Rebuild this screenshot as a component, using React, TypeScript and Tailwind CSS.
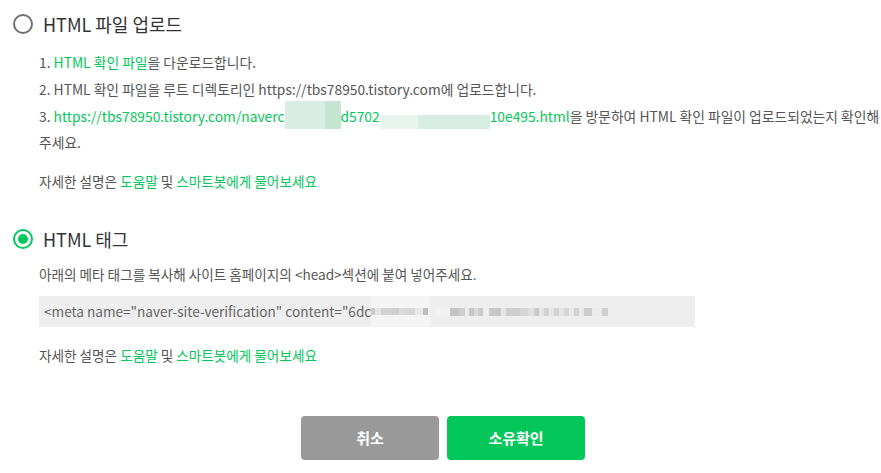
import React from "react";

const G = "text-[#03c75a]";

function Radio({ checked }: { checked: boolean }) {
  return checked ? (
    <span className="flex h-[20px] w-[20px] shrink-0 items-center justify-center rounded-full border-[2.5px] border-[#03c75a]">
      <span className="h-[10px] w-[10px] rounded-full bg-[#03c75a]" />
    </span>
  ) : (
    <span className="h-[20px] w-[20px] shrink-0 rounded-full border-2 border-[#707070]" />
  );
}

function Help() {
  return (
    <p className="whitespace-nowrap text-[13.6px] leading-[26px] text-[#555]">
      자세한 설명은 <span className={G}>도움말</span> 및{" "}
      <span className={G}>스마트봇에게 물어보세요</span>
    </p>
  );
}

const metaBlocks: [number, string][] = [
  [4, "#c9c9c9"], [6, "#e4e4e4"], [10, "#d2d2d2"], [8, "#cfcfcf"], [6, "#dadada"], [10, "#d6d6d6"],
  [8, "#e8e8e8"], [5, "#bdbdbd"], [14, "#f2f2f2"], [9, "#c4c4c4"], [6, "#cdcdcd"], [4, "#ececec"],
  [5, "#c6c6c6"], [4, "#d9d9d9"], [5, "#c9c9c9"], [6, "#ececec"], [12, "#c8c8c8"], [5, "#e6e6e6"],
  [14, "#cdcdcd"], [8, "#d4d4d4"], [6, "#e0e0e0"], [5, "#cacaca"], [5, "#e4e4e4"], [5, "#d1d1d1"],
  [5, "#e6e6e6"], [5, "#d3d3d3"], [5, "#e6e6e6"], [5, "#d5d5d5"], [5, "#e8e8e8"], [5, "#d0d0d0"],
  [5, "#e8e8e8"], [8, "#cccccc"], [10, "#eaeaea"], [6, "#cfcfcf"],
];

export default function App() {
  return (
    <div
      className="h-[473px] w-[881px] overflow-hidden bg-white pt-[14px]"
      style={{ fontFamily: '"Noto Sans CJK KR", "Noto Sans", sans-serif' }}
    >
      <div className="flex items-center gap-[10px] pl-[13px]">
        <Radio checked={false} />
        <span className="text-[18px] leading-[20px] text-[#333]">HTML 파일 업로드</span>
      </div>

      <div className="mt-[15px] pl-[39px] text-[13.8px] leading-[26px] text-[#555]">
        <p className="whitespace-nowrap">
          1. <span className={G}>HTML 확인 파일</span>을 다운로드합니다.
        </p>
        <p className="mt-px whitespace-nowrap">
          2. HTML 확인 파일을 루트 디렉토리인 https://tbs78950.tistory.com에 업로드합니다.
        </p>
        <p className="mt-px whitespace-nowrap">
          3. <span className={G}>https://tbs78950.tistory.com/naverc</span>
          <span className="relative inline-block h-[14px] w-[56px] align-middle">
            <span className="absolute bottom-[-4px] left-0 h-[28px] w-[40px] bg-[#d9eee2]" />
            <span className="absolute bottom-[-4px] left-[40px] h-[28px] w-[16px] bg-[#c7e4d3]" />
          </span>
          <span className={G}>d5702</span>
          <span className="relative inline-block h-[14px] w-[110px] align-middle">
            <span className="absolute bottom-[-4px] left-0 h-[14px] w-[38px] bg-[#e8f5ee]" />
            <span className="absolute bottom-[-4px] left-[38px] h-[14px] w-[72px] bg-[#d8ede1]" />
          </span>
          <span className={G}>10e495.html</span>
          을 방문하여 HTML 확인 파일이 업로드되었는지 확인해
          <br />
          주세요.
        </p>
        <div className="mt-[13px]">
          <Help />
        </div>
      </div>

      <div className="mt-[35px] flex items-center gap-[10px] pl-[13px]">
        <Radio checked />
        <span className="text-[18px] leading-[20px] text-[#333]">HTML 태그</span>
      </div>

      <div className="mt-[12px] pl-[39px]">
        <p className="whitespace-nowrap text-[13.6px] leading-[26px] text-[#555]">
          아래의 메타 태그를 복사해 사이트 홈페이지의 &lt;head&gt;섹션에 붙여 넣어주세요.
        </p>
        <div className="mt-[9px] flex h-[31px] w-[656px] items-center overflow-hidden bg-[#eeeeee] pl-[5px] text-[13.6px] text-[#666]">
          <span className="whitespace-nowrap">&lt;meta name="naver-site-verification" content="6dc</span>
          <span className="flex h-[31px] items-center bg-[#f4f4f4] pr-[2px]">
            {metaBlocks.slice(0, 8).map(([w, c], i) => (
              <span key={i} className="h-[7px]" style={{ width: w, background: c }} />
            ))}
          </span>
          <span className="ml-[6px] flex h-[10px] items-center">
            {metaBlocks.slice(8).map(([w, c], i) => (
              <span key={i} className="h-[8px]" style={{ width: w, background: c }} />
            ))}
          </span>
        </div>
        <div className="mt-[15px]">
          <Help />
        </div>
      </div>

      <div className="mt-[48px] flex justify-center gap-[8px] pl-[5px]">
        <button className="flex h-[44px] w-[138px] items-center justify-center rounded-[4px] bg-[#999999] text-[15px] font-bold text-white">
          취소
        </button>
        <button className="flex h-[44px] w-[138px] items-center justify-center rounded-[4px] bg-[#03c75a] text-[15px] font-bold text-white">
          소유확인
        </button>
      </div>
    </div>
  );
}
